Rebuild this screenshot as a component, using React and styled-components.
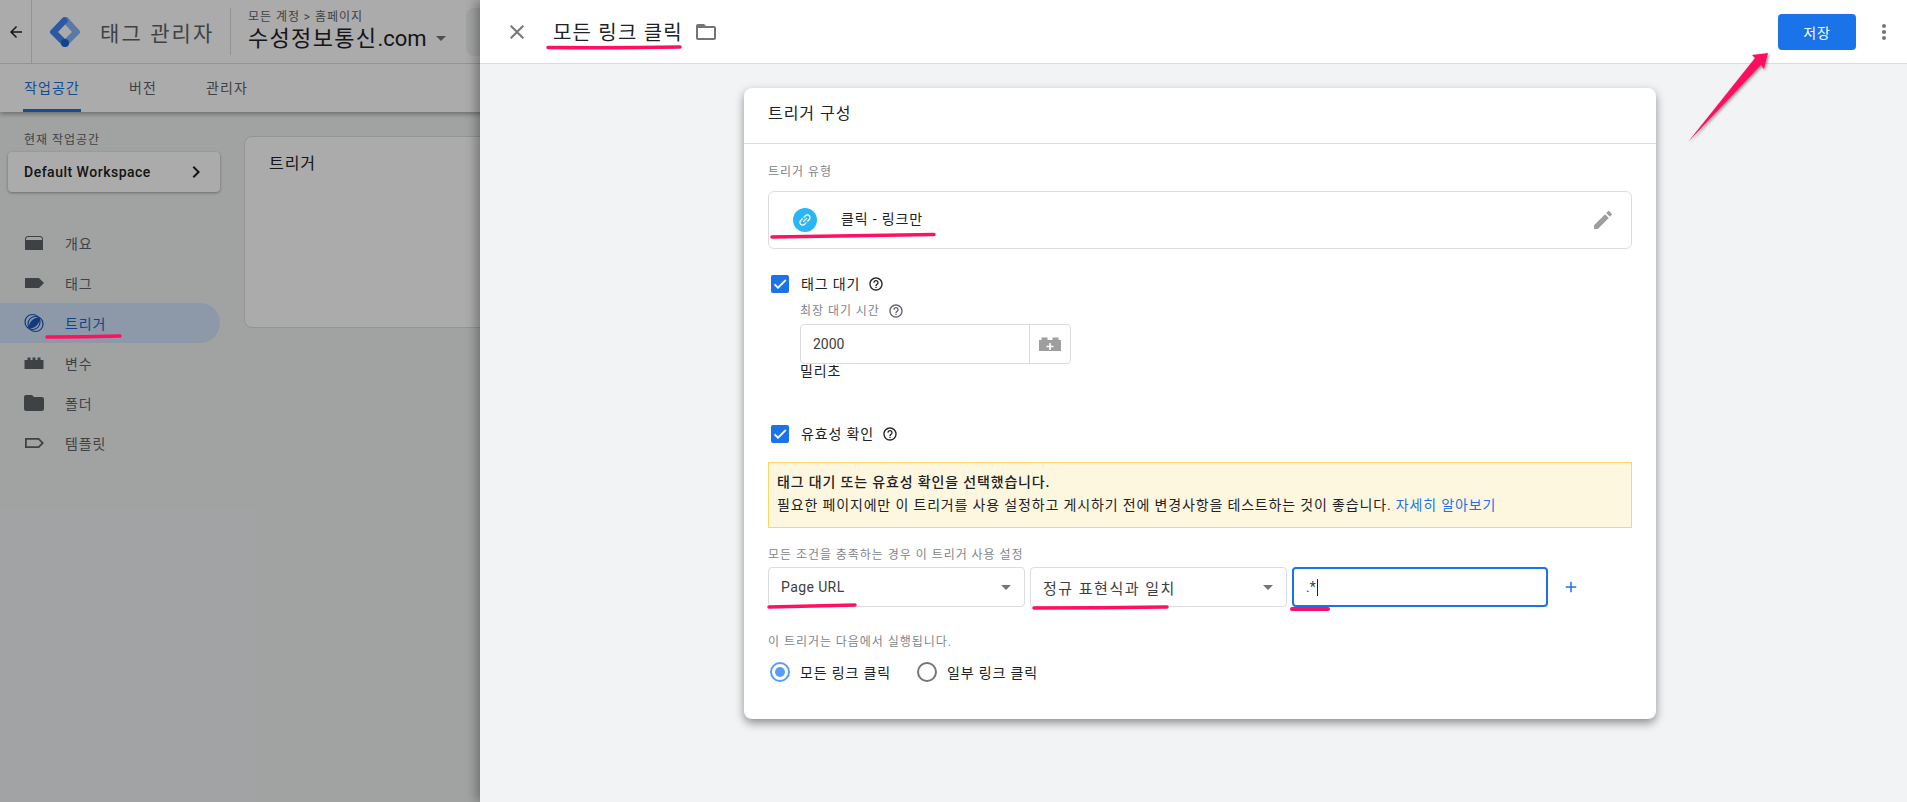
import React from 'react';
import styled, { createGlobalStyle } from 'styled-components';

const FONT = `Roboto, "Noto Sans CJK KR", sans-serif`;

const Global = createGlobalStyle`
  html, body {
    margin: 0;
    padding: 0;
    height: 100%;
    overflow: hidden;
    background: #f1f3f4;
    font-family: ${FONT};
  }
`;

const Icon = ({ d, size = 24, color = 'currentColor', box = '0 0 24 24' }) => (
  <svg width={size} height={size} viewBox={box} fill={color}>
    <path d={d} />
  </svg>
);

const P = {
  close: 'M19 6.41L17.59 5 12 10.59 6.41 5 5 6.41 10.59 12 5 17.59 6.41 19 12 13.41 17.59 19 19 17.59 13.41 12z',
  folderLine: 'M20 6h-8l-2-2H4c-1.1 0-1.99.9-1.99 2L2 18c0 1.1.9 2 2 2h16c1.1 0 2-.9 2-2V8c0-1.1-.9-2-2-2zm0 12H4V8h16v10z',
  folder: 'M10 4H4c-1.1 0-1.99.9-1.99 2L2 18c0 1.1.9 2 2 2h16c1.1 0 2-.9 2-2V8c0-1.1-.9-2-2-2h-8l-2-2z',
  back: 'M20 11H7.83l5.59-5.59L12 4l-8 8 8 8 1.41-1.41L7.83 13H20v-2z',
  chevron: 'M10 6L8.59 7.41 13.17 12l-4.58 4.59L10 18l6-6z',
  link: 'M3.9 12c0-1.71 1.39-3.1 3.1-3.1h4V7H7c-2.76 0-5 2.24-5 5s2.24 5 5 5h4v-1.9H7c-1.71 0-3.1-1.39-3.1-3.1zM8 13h8v-2H8v2zm9-6h-4v1.9h4c1.71 0 3.1 1.39 3.1 3.1s-1.39 3.1-3.1 3.1h-4V17h4c2.76 0 5-2.24 5-5s-2.24-5-5-5z',
  pencil: 'M3 17.25V21h3.75L17.81 9.94l-3.75-3.75L3 17.25zM20.71 7.04c.39-.39.39-1.02 0-1.41l-2.34-2.34c-.39-.39-1.02-.39-1.41 0l-1.83 1.83 3.75 3.75 1.83-1.83z',
  help: 'M11 18h2v-2h-2v2zm1-16C6.48 2 2 6.48 2 12s4.48 10 10 10 10-4.48 10-10S17.52 2 12 2zm0 18c-4.41 0-8-3.59-8-8s3.59-8 8-8 8 3.59 8 8-3.59 8-8 8zm0-14c-2.21 0-4 1.79-4 4h2c0-1.1.9-2 2-2s2 .9 2 2c0 2-3 1.75-3 5h2c0-2.25 3-2.5 3-5 0-2.21-1.79-4-4-4z',
  check: 'M9 16.17L4.83 12l-1.42 1.41L9 19 21 7l-1.41-1.41z',
  plus: 'M19 13h-6v6h-2v-6H5v-2h6V5h2v6h6v2z',
  overview: 'M6 5h12c1.66 0 3 1.34 3 3v11H3V8c0-1.66 1.34-3 3-3zm0 1C5 6 4 7 4 8v1h16V8c0-1-1-2-2-2H6z',
  tag: 'M3 7h14l5 5-5 5H3z',
  lego: 'M2.500 9h3V6.500h3V9h2V6.500h3V9h2V6.500h3V9h3v9h-19z',
  template: 'M3 7h14l5 5-5 5H3V7zm1.800 1.800v6.400h11.450l3.200-3.200-3.200-3.200H4.800z',
};

const GtmLogo = () => (
  <svg width="30" height="30" viewBox="0 0 30 30" fill="none">
    <path d="M16 3.500 L26.500 15 L15 26.500" stroke="#8ab4f8" strokeWidth="6.5" strokeLinecap="round" />
    <path d="M14.500 3.500 L3.500 15 L15 26.500" stroke="#4285f4" strokeWidth="6.5" strokeLinecap="round" />
    <circle cx="15" cy="26" r="4" fill="#1967d2" />
  </svg>
);

const TriggerIcon = () => (
  <svg width="24" height="24" viewBox="0 0 24 24" fill="none">
    <circle cx="10.500" cy="11" r="7.500" stroke="#1a56b8" strokeWidth="1.200" />
    <circle cx="13.500" cy="13" r="7.500" stroke="#1a56b8" strokeWidth="1.200" />
    <path d="M17.500 6.500C18.500 11 14.500 17.500 7 17.500C6 13 10 6.500 17.500 6.500z" fill="#1a56b8" />
  </svg>
);

const CaretDown = () => (
  <svg width="10" height="5" viewBox="0 0 10 5">
    <path d="M0 0h10L5 5z" fill="#757575" />
  </svg>
);

const LegoPlus = () => (
  <svg width="24" height="24" viewBox="0 0 24 24">
    <path d="M1 8h2.500V5.500h6V8h5V5.500h6V8H23v11H1z" fill="#9e9e9e" />
    <path d="M11.200 11h1.600v2.700h2.700v1.600h-2.700V18h-1.600v-2.700H8.500v-1.600h2.700z" fill="#fff" />
  </svg>
);

/* page behind the panel */
const Stage = styled.div`
  position: relative;
  width: 100%;
  height: 100vh;
  overflow: hidden;
  background: #f1f3f4;
`;

const AppTop = styled.header`
  background: #fff;
  box-shadow: 0 2px 5px rgba(0, 0, 0, 0.35);
`;

const AppBar = styled.div`
  display: flex;
  align-items: center;
  height: 63px;
  border-bottom: 1px solid #dadce0;
  box-sizing: content-box;
`;

const BackCell = styled.div`
  display: flex;
  align-items: center;
  justify-content: center;
  width: 31px;
  height: 63px;
  border-right: 1px solid #dadce0;
  color: #202124;
`;

const Brand = styled.div`
  display: flex;
  align-items: center;
  margin-left: 18px;
  width: 180px;
  height: 47px;
  border-right: 1px solid #dadce0;
  box-sizing: content-box;
`;

const BrandName = styled.span`
  margin-left: 20px;
  font-size: 21px;
  letter-spacing: 0.1em;
  color: #5f6368;
  white-space: nowrap;
`;

const Account = styled.div`
  margin-left: 17px;
  width: 218px;
`;

const Crumb = styled.div`
  font-size: 12px;
  line-height: 14px;
  letter-spacing: 0.08em;
  color: #5f6368;
  white-space: nowrap;
`;

const Container = styled.div`
  display: flex;
  align-items: center;
  font-size: 22px;
  line-height: 30px;
  color: #202124;
  white-space: nowrap;
  svg {
    margin-left: 9px;
  }
`;

const ContainerKo = styled.span`
  letter-spacing: 0.06em;
`;

const SearchBox = styled.div`
  width: 200px;
  height: 48px;
  border-radius: 8px;
  background: #f1f3f4;
`;

const Tabs = styled.nav`
  display: flex;
  height: 48px;
  padding-left: 23px;
  gap: 47px;
`;

const Tab = styled.div`
  display: flex;
  align-items: center;
  padding: 0 1px;
  height: 48px;
  font-size: 14px;
  letter-spacing: 0.08em;
  color: ${(p) => (p.$active ? '#1a73e8' : '#5f6368')};
  border-bottom: 3px solid ${(p) => (p.$active ? '#1a73e8' : 'transparent')};
  box-sizing: border-box;
`;

const Below = styled.div`
  display: flex;
`;

const Side = styled.aside`
  width: 220px;
  flex: none;
  padding-top: 21px;
`;

const SideLabel = styled.div`
  margin-left: 24px;
  font-size: 12px;
  line-height: 14px;
  letter-spacing: 0.08em;
  color: #5f6368;
`;

const WorkspaceCard = styled.div`
  display: flex;
  align-items: center;
  justify-content: space-between;
  margin: 5px 0 0 8px;
  padding: 0 12px 0 16px;
  height: 40px;
  border-radius: 4px;
  background: #fff;
  font-size: 14px;
  font-weight: 500;
  letter-spacing: 0.5px;
  color: #202124;
  box-shadow: 0 1px 3px rgba(0, 0, 0, 0.35);
`;

const NavList = styled.div`
  margin-top: 31px;
`;

const NavRow = styled.div`
  display: flex;
  align-items: center;
  height: 40px;
  padding-left: 22px;
  gap: 19px;
  border-radius: 0 20px 20px 0;
  font-size: 14px;
  letter-spacing: 0.06em;
  background: ${(p) => (p.$active ? '#d2e3fc' : 'transparent')};
  color: ${(p) => (p.$active ? '#1967d2' : '#5f6368')};
  svg {
    flex: none;
  }
`;

const TriggerCard = styled.section`
  margin: 24px 0 0 24px;
  padding: 13px 24px;
  width: 1000px;
  height: 192px;
  border: 1px solid #dadce0;
  border-radius: 8px;
  background: #fff;
  font-size: 16px;
  letter-spacing: 0.06em;
  color: #202124;
  box-sizing: border-box;
`;

const Dim = styled.div`
  position: absolute;
  inset: 0;
  background: rgba(0, 0, 0, 0.33);
`;

/* slide-over editor */
const Panel = styled.div`
  position: absolute;
  top: 0;
  right: 0;
  bottom: 0;
  left: 480px;
  display: flex;
  flex-direction: column;
  background: #f1f3f4;
  box-shadow: -4px 0 10px rgba(0, 0, 0, 0.3);
`;

const PanelHead = styled.div`
  display: flex;
  align-items: center;
  flex: none;
  height: 63px;
  padding: 0 11px 0 25px;
  background: #fff;
  border-bottom: 1px solid #dadce0;
  box-sizing: content-box;
`;

const CloseBtn = styled.div`
  display: flex;
  color: #757575;
`;

const PanelTitle = styled.h1`
  margin: 0 0 0 24px;
  font-size: 20px;
  font-weight: 400;
  letter-spacing: 0.06em;
  color: #202124;
`;

const FolderBtn = styled.div`
  display: flex;
  margin-left: 11px;
  color: #757575;
`;

const SaveBtn = styled.button`
  margin-left: auto;
  width: 78px;
  height: 36px;
  border: 0;
  border-radius: 4px;
  background: #1a73e8;
  color: #fff;
  font-family: ${FONT};
  font-size: 14px;
  letter-spacing: 0.06em;
`;

const MoreBtn = styled.div`
  display: flex;
  margin-left: 16px;
  color: #757575;
`;

const Card = styled.section`
  margin: 24px 0 0 264px;
  width: 912px;
  height: 631px;
  border-radius: 8px;
  background: #fff;
  box-shadow: 0 4px 10px rgba(0, 0, 0, 0.42);
  box-sizing: border-box;
`;

const CardHead = styled.div`
  display: flex;
  align-items: center;
  height: 47px;
  padding: 0 24px 8px;
  font-size: 16px;
  letter-spacing: 0.06em;
  color: #202124;
  border-bottom: 1px solid #dadce0;
  box-sizing: content-box;
`;

const CardBody = styled.div`
  padding: 0 24px;
`;

const FieldLabel = styled.div`
  font-size: 12px;
  line-height: 14px;
  letter-spacing: 0.08em;
  color: #80868b;
  margin-top: ${(p) => p.$top || 0}px;
`;

const TypeBox = styled.div`
  display: flex;
  align-items: center;
  margin-top: 12px;
  padding: 0 16px 0 24px;
  height: 58px;
  border: 1px solid #dadce0;
  border-radius: 6px;
  font-size: 14px;
  letter-spacing: 0.06em;
  color: #202124;
  box-sizing: border-box;
`;

const LinkBadge = styled.span`
  display: flex;
  align-items: center;
  justify-content: center;
  width: 24px;
  height: 24px;
  border-radius: 50%;
  background: #29b6f6;
  color: #fff;
  svg {
    transform: rotate(-45deg);
  }
`;

const TypeName = styled.span`
  margin-left: 24px;
  padding-bottom: 5px;
`;

const PencilBtn = styled.div`
  display: flex;
  margin-left: auto;
  color: #9e9e9e;
`;

const CheckRow = styled.div`
  display: flex;
  align-items: center;
  margin: ${(p) => p.$top}px 0 0 3px;
  font-size: 14px;
  line-height: 18px;
  letter-spacing: 0.06em;
  color: #202124;
`;

const CheckBox = styled.span`
  display: flex;
  align-items: center;
  justify-content: center;
  width: 18px;
  height: 18px;
  margin-right: 12px;
  border-radius: 2px;
  background: #1a73e8;
  color: #fff;
  path {
    stroke: currentColor;
    stroke-width: 1;
  }
`;

const Help = styled.span`
  display: flex;
  margin-left: 8px;
  color: ${(p) => p.$color || '#202124'};
`;

const Indented = styled.div`
  margin-left: 32px;
`;

const WaitLabel = styled.div`
  display: flex;
  align-items: center;
  margin-top: 10px;
  font-size: 12px;
  line-height: 14px;
  letter-spacing: 0.08em;
  color: #80868b;
`;

const WaitInput = styled.div`
  display: flex;
  margin-top: 5px;
  width: 271px;
  height: 40px;
  border: 1px solid #dadce0;
  border-radius: 4px;
  box-sizing: border-box;
`;

const WaitValue = styled.div`
  flex: 1;
  display: flex;
  align-items: center;
  padding-left: 12px;
  font-size: 14px;
  color: #3c4043;
`;

const VarBtn = styled.div`
  display: flex;
  align-items: center;
  justify-content: center;
  width: 40px;
  border-left: 1px solid #dadce0;
`;

const Unit = styled.div`
  margin-top: -2px;
  font-size: 14px;
  line-height: 18px;
  letter-spacing: 0.06em;
  color: #202124;
`;

const Notice = styled.div`
  margin-top: 19px;
  padding: 8px 8px;
  height: 66px;
  border: 1px solid #fdd663;
  background: #fef7e0;
  font-size: 14px;
  line-height: 23px;
  letter-spacing: 0.06em;
  color: #202124;
  box-sizing: border-box;
`;

const NoticeLead = styled.div`
  font-weight: 500;
`;

const NoticeLink = styled.span`
  color: #1a73e8;
`;

const ConditionRow = styled.div`
  display: flex;
  align-items: center;
  gap: 5px;
  margin-top: 5px;
`;

const SelectBox = styled.div`
  display: flex;
  align-items: center;
  justify-content: space-between;
  width: 257px;
  height: 40px;
  padding: 0 13px 0 12px;
  border: 1px solid #dadce0;
  border-radius: 4px;
  color: #3c4043;
  box-sizing: border-box;
`;

const SelectText = styled.span`
  font-size: ${(p) => (p.$ko ? 15 : 14)}px;
  letter-spacing: ${(p) => (p.$ko ? '0.1em' : '0.4px')};
`;

const RegexInput = styled.div`
  display: flex;
  align-items: center;
  width: 256px;
  height: 40px;
  padding-left: 12px;
  border: 2px solid #1a73e8;
  border-radius: 4px;
  font-size: 14px;
  color: #3c4043;
  box-sizing: border-box;
`;

const Cursor = styled.span`
  width: 1px;
  height: 17px;
  margin-left: 1px;
  background: #202124;
`;

const AddBtn = styled.div`
  display: flex;
  margin-left: 9px;
  color: #1a73e8;
`;

const RadioRow = styled.div`
  display: flex;
  align-items: center;
  margin: 13px 0 0 2px;
`;

const Radio = styled.span`
  display: flex;
  align-items: center;
  justify-content: center;
  width: 20px;
  height: 20px;
  border: 2px solid ${(p) => (p.$on ? '#5b9bf8' : '#757575')};
  border-radius: 50%;
  box-sizing: border-box;
  &::after {
    content: '';
    width: 10px;
    height: 10px;
    border-radius: 50%;
    background: ${(p) => (p.$on ? '#5b9bf8' : 'transparent')};
  }
`;

const RadioText = styled.span`
  margin: 0 26px 0 10px;
  font-size: 14px;
  letter-spacing: 0.06em;
  color: #202124;
`;

const Marks = styled.svg`
  position: absolute;
  left: 0;
  top: 0;
`;

const Annotations = () => (
  <Marks width="1907" height="802" viewBox="0 0 1907 802" fill="none">
    <defs>
      <filter id="arrowShade" x="-20%" y="-20%" width="150%" height="150%">
        <feDropShadow dx="1" dy="1.500" stdDeviation="1.500" floodColor="#000" floodOpacity="0.45" />
      </filter>
    </defs>
    <g stroke="#ff1060" strokeWidth="3.5" strokeLinecap="round">
      <path d="M548 47.500 Q620 48 680 47" />
      <path d="M47 337 Q85 337 120 336" />
      <path d="M772 237 Q850 236 934 234.500" />
      <path d="M769 607 Q810 606 855 605" />
      <path d="M1034 608 Q1100 608 1167 607" />
      <path d="M1292 609 L1328 609" strokeWidth="4" />
    </g>
    <path
      d="M1688 142 L1755 58 L1752 55 L1768 53 L1764 69 L1761 65 z"
      fill="#ff1060"
      filter="url(#arrowShade)"
    />
  </Marks>
);

export default function App() {
  return (
    <Stage>
      <Global />
      <AppTop>
        <AppBar>
          <BackCell>
            <Icon d={P.back} size={18} />
          </BackCell>
          <Brand>
            <GtmLogo />
            <BrandName>태그 관리자</BrandName>
          </Brand>
          <Account>
            <Crumb>모든 계정 &gt; 홈페이지</Crumb>
            <Container>
              <ContainerKo>수성정보통신</ContainerKo>.com
              <CaretDown />
            </Container>
          </Account>
          <SearchBox />
        </AppBar>
        <Tabs>
          <Tab $active>작업공간</Tab>
          <Tab>버전</Tab>
          <Tab>관리자</Tab>
        </Tabs>
      </AppTop>
      <Below>
        <Side>
          <SideLabel>현재 작업공간</SideLabel>
          <WorkspaceCard>
            Default Workspace
            <Icon d={P.chevron} size={24} />
          </WorkspaceCard>
          <NavList>
            <NavRow>
              <Icon d={P.overview} />
              개요
            </NavRow>
            <NavRow>
              <Icon d={P.tag} />
              태그
            </NavRow>
            <NavRow $active>
              <TriggerIcon />
              트리거
            </NavRow>
            <NavRow>
              <Icon d={P.lego} />
              변수
            </NavRow>
            <NavRow>
              <Icon d={P.folder} />
              폴더
            </NavRow>
            <NavRow>
              <Icon d={P.template} />
              템플릿
            </NavRow>
          </NavList>
        </Side>
        <TriggerCard>트리거</TriggerCard>
      </Below>
      <Dim />
      <Panel>
        <PanelHead>
          <CloseBtn>
            <Icon d={P.close} />
          </CloseBtn>
          <PanelTitle>모든 링크 클릭</PanelTitle>
          <FolderBtn>
            <Icon d={P.folderLine} />
          </FolderBtn>
          <SaveBtn>저장</SaveBtn>
          <MoreBtn>
            <svg width="24" height="24" viewBox="0 0 24 24" fill="currentColor">
              <circle cx="12" cy="6" r="2" />
              <circle cx="12" cy="12" r="2" />
              <circle cx="12" cy="18" r="2" />
            </svg>
          </MoreBtn>
        </PanelHead>
        <Card>
          <CardHead>트리거 구성</CardHead>
          <CardBody>
            <FieldLabel $top={21}>트리거 유형</FieldLabel>
            <TypeBox>
              <LinkBadge>
                <Icon d={P.link} size={16} />
              </LinkBadge>
              <TypeName>클릭 - 링크만</TypeName>
              <PencilBtn>
                <Icon d={P.pencil} />
              </PencilBtn>
            </TypeBox>
            <CheckRow $top={26}>
              <CheckBox>
                <Icon d={P.check} size={16} />
              </CheckBox>
              태그 대기
              <Help>
                <Icon d={P.help} size={16} />
              </Help>
            </CheckRow>
            <Indented>
              <WaitLabel>
                최장 대기 시간
                <Help $color="#5f6368">
                  <Icon d={P.help} size={16} />
                </Help>
              </WaitLabel>
              <WaitInput>
                <WaitValue>2000</WaitValue>
                <VarBtn>
                  <LegoPlus />
                </VarBtn>
              </WaitInput>
              <Unit>밀리초</Unit>
            </Indented>
            <CheckRow $top={45}>
              <CheckBox>
                <Icon d={P.check} size={16} />
              </CheckBox>
              유효성 확인
              <Help>
                <Icon d={P.help} size={16} />
              </Help>
            </CheckRow>
            <Notice>
              <NoticeLead>태그 대기 또는 유효성 확인을 선택했습니다.</NoticeLead>
              필요한 페이지에만 이 트리거를 사용 설정하고 게시하기 전에 변경사항을 테스트하는 것이 좋습니다.{' '}
              <NoticeLink>자세히 알아보기</NoticeLink>
            </Notice>
            <FieldLabel $top={20}>모든 조건을 충족하는 경우 이 트리거 사용 설정</FieldLabel>
            <ConditionRow>
              <SelectBox>
                <SelectText>Page URL</SelectText>
                <CaretDown />
              </SelectBox>
              <SelectBox>
                <SelectText $ko>정규 표현식과 일치</SelectText>
                <CaretDown />
              </SelectBox>
              <RegexInput>
                .*
                <Cursor />
              </RegexInput>
              <AddBtn>
                <Icon d={P.plus} size={18} />
              </AddBtn>
            </ConditionRow>
            <FieldLabel $top={28}>이 트리거는 다음에서 실행됩니다.</FieldLabel>
            <RadioRow>
              <Radio $on />
              <RadioText>모든 링크 클릭</RadioText>
              <Radio />
              <RadioText>일부 링크 클릭</RadioText>
            </RadioRow>
          </CardBody>
        </Card>
      </Panel>
      <Annotations />
    </Stage>
  );
}
